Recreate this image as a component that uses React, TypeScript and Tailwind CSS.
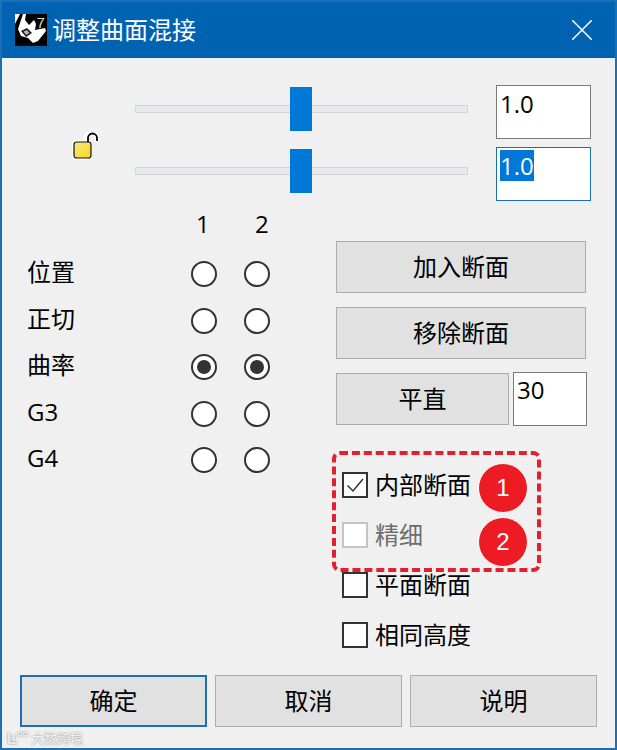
const font = { fontFamily: '"Open Sans", "Noto Sans CJK SC", sans-serif' };

function RhinoLogo() {
  return (
    <svg viewBox="0 0 32 32" className="h-8 w-8 shrink-0">
      <rect width="32" height="32" fill="#000" />
      <path d="M0 0 L5 0 L0 10 Z" fill="#fff" />
      <path d="M8 0 L11 0 L10 6 L14 11 L19 6 L21 10 L20 16 L30 14 L31 17 L23 27 L18 29 L13 24 L6 22 L3 15 Z" fill="#fff" />
      <path d="M6 17 L12 14 L17 19 L11 23 Z" fill="#1a1a1a" />
      <path d="M8.5 17.5 L12 16 L14.5 19 L11 21 Z" fill="#b5b5b5" />
      <text x="21.5" y="14" fontSize="15" fill="#ddd" fontFamily="Liberation Sans">7</text>
    </svg>
  );
}

function LockIcon() {
  return (
    <svg viewBox="0 0 28 30" className="h-[30px] w-7">
      <defs>
        <linearGradient id="lockFill" x1="0" y1="0" x2="1" y2="1">
          <stop offset="0" stopColor="#f5e88a" />
          <stop offset="1" stopColor="#fbd712" />
        </linearGradient>
      </defs>
      <path d="M15 12 V6 a5.5 5.5 0 0 1 11 0 V10" fill="none" stroke="#fff" strokeWidth="5" />
      <rect x="1" y="8" width="20" height="20" rx="3" fill="#fff" />
      <path d="M17 10 V6 a4.5 4.5 0 0 1 9 0 V9" fill="none" stroke="#000" strokeWidth="1.8" />
      <rect x="3" y="10" width="17" height="16" rx="2.5" fill="url(#lockFill)" stroke="#111" strokeWidth="1.2" />
    </svg>
  );
}

function Slider() {
  return (
    <div className="relative h-11 w-[333px]">
      <div className="absolute inset-x-0 top-[18px] h-2 border border-[#d6d6d6] bg-[#e7eaea]" />
      <div className="absolute left-[155px] top-0 h-11 w-[22px] bg-[#0078d7]" />
    </div>
  );
}

function Radio({ checked = false }: { checked?: boolean }) {
  return (
    <div className="flex h-[26px] w-[26px] items-center justify-center rounded-full border-2 border-[#333] bg-white">
      {checked && <div className="h-[14px] w-[14px] rounded-full bg-[#333]" />}
    </div>
  );
}

function Check({
  label,
  checked = false,
  disabled = false,
}: {
  label: string;
  checked?: boolean;
  disabled?: boolean;
}) {
  return (
    <div className="flex h-[26px] items-center gap-[7px]">
      <div
        className={`flex h-[26px] w-[26px] items-center justify-center border-2 bg-white ${
          disabled ? "border-[#c4c4c4]" : "border-[#333]"
        }`}
      >
        {checked && (
          <svg viewBox="0 0 22 22" className="h-[22px] w-[22px]">
            <path d="M3.5 11.5 L9 17 L19 5" fill="none" stroke="#333" strokeWidth="1.5" />
          </svg>
        )}
      </div>
      <span className={`text-[24px] leading-none ${disabled ? "text-[#6d6d6d]" : "text-black"}`}>{label}</span>
    </div>
  );
}

function Button({
  label,
  focused = false,
  className = "",
}: {
  label: string;
  focused?: boolean;
  className?: string;
}) {
  return (
    <div
      className={`flex h-[52px] items-center justify-center bg-[#e1e1e1] text-[24px] text-black ${
        focused ? "border-2 border-[#1a6fb5]" : "border border-[#adadad]"
      } ${className}`}
    >
      {label}
    </div>
  );
}

const rows = [
  { label: "位置" },
  { label: "正切" },
  { label: "曲率", checked: true },
  { label: "G3" },
  { label: "G4" },
];

export default function App() {
  return (
    <div
      className="relative flex h-[750px] w-[617px] flex-col overflow-hidden border-2 border-[#1a6fb5] bg-[#f0f0f0]"
      style={font}
    >
      {/* title bar */}
      <div className="flex h-14 shrink-0 items-center bg-[#0063b1] pl-[13px] pr-[23px] text-white">
        <RhinoLogo />
        <span className="ml-[5px] text-[24px] leading-none">调整曲面混接</span>
        <svg viewBox="0 0 20 20" className="ml-auto h-5 w-5">
          <path d="M0 0 L20 20 M20 0 L0 20" fill="none" stroke="#fff" strokeWidth="1.5" />
        </svg>
      </div>

      {/* sliders + edit boxes */}
      <div className="flex pl-[71px] pt-[27px]">
        <div className="-ml-[2px] mt-[47px] h-[30px] w-7 shrink-0">
          <LockIcon />
        </div>
        <div className="ml-[36px] flex w-[333px] flex-col gap-[18px] pt-[2px]">
          <Slider />
          <Slider />
        </div>
        <div className="ml-7 flex flex-col gap-2">
          <div className="h-[54px] w-[95px] border border-[#7a7a7a] bg-white pl-[3px] text-[24px] leading-[36px] text-black">
            1.0
          </div>
          <div className="h-[54px] w-[95px] border border-[#1a6fb5] bg-white pl-[3px] pt-[2px] text-[24px] leading-[31px]">
            <span className="inline-block bg-[#0078d7] text-white">1.0</span>
          </div>
        </div>
      </div>

      {/* main area */}
      <div className="flex">
        {/* continuity table */}
        <div className="ml-[25px] w-[243px] pt-[5px]">
          <div className="flex h-9 items-center pl-[169px] text-[24px] text-black">
            <span className="w-[59px]">1</span>
            <span>2</span>
          </div>
          <div className="mt-[19px] flex flex-col gap-[20.5px]">
            {rows.map((r) => (
              <div key={r.label} className="flex h-[26px] items-center">
                <span className="w-[164px] -translate-y-[2px] text-[24px] leading-none text-black">{r.label}</span>
                <Radio checked={r.checked} />
                <div className="ml-[27px]">
                  <Radio checked={r.checked} />
                </div>
              </div>
            ))}
          </div>
        </div>

        {/* right column */}
        <div className="ml-[66px] w-[251px] pt-[40px]">
          <Button label="加入断面" className="w-[250px]" />
          <Button label="移除断面" className="mt-[14px] w-[250px]" />
          <div className="mt-[13px] flex items-center gap-1">
            <Button label="平直" className="w-[173px]" />
            <div className="h-[54px] w-[74px] border border-[#7a7a7a] bg-white pl-[3px] text-[24px] leading-[34px] text-black">
              30
            </div>
          </div>
          <div className="relative mt-[46px] flex flex-col gap-6 pl-[6px]">
            <Check label="内部断面" checked />
            <Check label="精细" disabled />
            <Check label="平面断面" />
            <Check label="相同高度" />

            {/* annotation */}
            <div className="absolute -left-[4px] -top-[21px] h-[121px] w-[209px] rounded-[8px] border-[4px] border-dashed border-[#e3202f]" />
            <div className="absolute left-[142px] top-[-9px] flex h-[50px] w-[50px] items-center justify-center rounded-full border border-white bg-[#ed1c24] font-['Liberation_Sans'] text-[24px] text-white">
              1
            </div>
            <div className="absolute left-[142px] top-[45px] flex h-[50px] w-[50px] items-center justify-center rounded-full border border-white bg-[#ed1c24] font-['Liberation_Sans'] text-[24px] text-white">
              2
            </div>
          </div>
        </div>
      </div>

      {/* dialog buttons */}
      <div className="absolute inset-x-0 bottom-[21px] flex gap-2 pl-[18px]">
        <Button label="确定" focused className="w-[187px]" />
        <Button label="取消" className="w-[187px]" />
        <Button label="说明" className="w-[187px]" />
      </div>

      {/* watermark */}
      <div className="absolute bottom-[3px] left-[5px] flex items-center gap-[2px] text-[13px] leading-none text-[#f4f4f4] [text-shadow:0_0_2px_#777]">
        <svg viewBox="0 0 22 14" className="h-[14px] w-[22px] drop-shadow-[0_0_1px_#777]">
          <path d="M2 2 V12 H10 M8 4 a4 4 0 0 0 0 6" fill="none" stroke="#f4f4f4" strokeWidth="1.6" />
          <circle cx="13" cy="3" r="2" fill="none" stroke="#f4f4f4" />
          <circle cx="18.5" cy="3" r="2" fill="none" stroke="#f4f4f4" />
        </svg>
        <span>大数跨境</span>
      </div>
    </div>
  );
}
